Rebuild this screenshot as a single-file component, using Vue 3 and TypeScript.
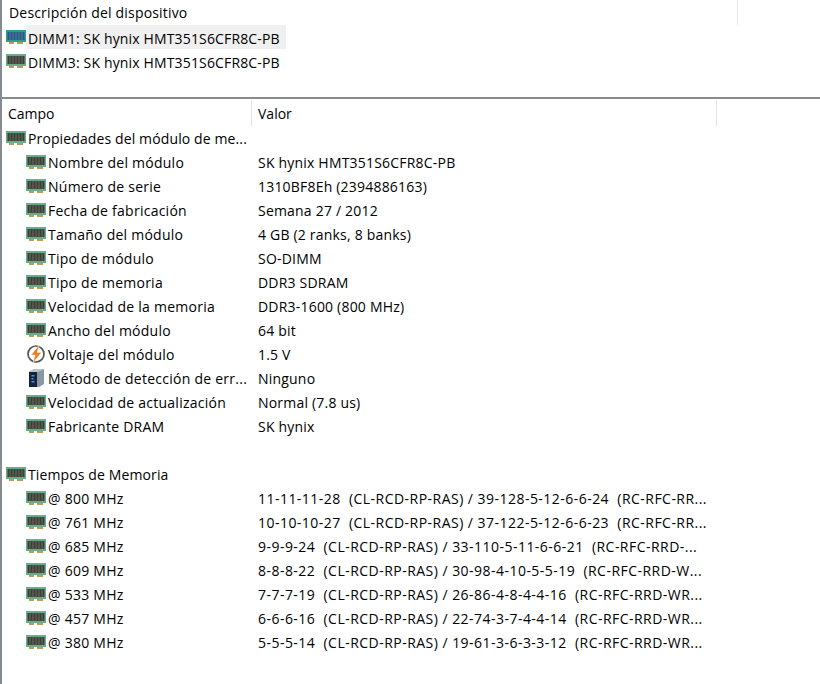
<script setup lang="ts">
type Row = {
  field: string;
  value?: string;
  icon?: 'ram' | 'volt' | 'ecc';
  level: 0 | 1;
  timing?: boolean;
};

const devices = [
  { id: 'dimm1', label: 'DIMM1: SK hynix HMT351S6CFR8C-PB', selected: true },
  { id: 'dimm3', label: 'DIMM3: SK hynix HMT351S6CFR8C-PB', selected: false },
];

const rows: Row[] = [
  { field: 'Propiedades del módulo de me...', level: 0, icon: 'ram' },
  { field: 'Nombre del módulo', value: 'SK hynix HMT351S6CFR8C-PB', level: 1, icon: 'ram' },
  { field: 'Número de serie', value: '1310BF8Eh (2394886163)', level: 1, icon: 'ram' },
  { field: 'Fecha de fabricación', value: 'Semana 27 / 2012', level: 1, icon: 'ram' },
  { field: 'Tamaño del módulo', value: '4 GB (2 ranks, 8 banks)', level: 1, icon: 'ram' },
  { field: 'Tipo de módulo', value: 'SO-DIMM', level: 1, icon: 'ram' },
  { field: 'Tipo de memoria', value: 'DDR3 SDRAM', level: 1, icon: 'ram' },
  { field: 'Velocidad de la memoria', value: 'DDR3-1600 (800 MHz)', level: 1, icon: 'ram' },
  { field: 'Ancho del módulo', value: '64 bit', level: 1, icon: 'ram' },
  { field: 'Voltaje del módulo', value: '1.5 V', level: 1, icon: 'volt' },
  { field: 'Método de detección de err...', value: 'Ninguno', level: 1, icon: 'ecc' },
  { field: 'Velocidad de actualización', value: 'Normal (7.8 us)', level: 1, icon: 'ram' },
  { field: 'Fabricante DRAM', value: 'SK hynix', level: 1, icon: 'ram' },
  { field: '', level: 0 },
  { field: 'Tiempos de Memoria', level: 0, icon: 'ram' },
  { field: '@ 800 MHz', value: '11-11-11-28  (CL-RCD-RP-RAS) / 39-128-5-12-6-6-24  (RC-RFC-RR...', level: 1, icon: 'ram', timing: true },
  { field: '@ 761 MHz', value: '10-10-10-27  (CL-RCD-RP-RAS) / 37-122-5-12-6-6-23  (RC-RFC-RR...', level: 1, icon: 'ram', timing: true },
  { field: '@ 685 MHz', value: '9-9-9-24  (CL-RCD-RP-RAS) / 33-110-5-11-6-6-21  (RC-RFC-RRD-...', level: 1, icon: 'ram', timing: true },
  { field: '@ 609 MHz', value: '8-8-8-22  (CL-RCD-RP-RAS) / 30-98-4-10-5-5-19  (RC-RFC-RRD-W...', level: 1, icon: 'ram', timing: true },
  { field: '@ 533 MHz', value: '7-7-7-19  (CL-RCD-RP-RAS) / 26-86-4-8-4-4-16  (RC-RFC-RRD-WR...', level: 1, icon: 'ram', timing: true },
  { field: '@ 457 MHz', value: '6-6-6-16  (CL-RCD-RP-RAS) / 22-74-3-7-4-4-14  (RC-RFC-RRD-WR...', level: 1, icon: 'ram', timing: true },
  { field: '@ 380 MHz', value: '5-5-5-14  (CL-RCD-RP-RAS) / 19-61-3-6-3-3-12  (RC-RFC-RRD-WR...', level: 1, icon: 'ram', timing: true },
];

const pins = [3.5, 6.5, 9.5, 12.5, 15.5];
</script>

<template>
  <div class="panel">
    <section class="devices">
      <div class="devices__head">
        <span class="devices__title">Descripción del dispositivo</span>
        <span class="devices__rule" />
      </div>
      <div v-for="device in devices" :key="device.id" class="device">
        <svg class="ram" viewBox="0 0 20 15" aria-hidden="true">
          <rect x="0" y="0" width="20" height="12" :fill="device.selected ? '#2f9c96' : '#66ad8d'" />
          <rect x="3" y="12" width="5" height="2" fill="#c9965a" />
          <rect x="11" y="12" width="6" height="2" fill="#c9965a" />
          <rect x="1.5" y="2" width="17" height="8" :fill="device.selected ? '#28597f' : '#3f3e38'" />
          <rect v-for="p in pins" :key="p" :x="p" y="2" width="1" height="8" :fill="device.selected ? '#4f849e' : '#6a6a62'" />
        </svg>
        <span class="device__label" :class="{ 'device__label--selected': device.selected }">{{ device.label }}</span>
      </div>
    </section>

    <section class="details">
      <div class="details__head">
        <span class="details__col details__col--field">Campo</span>
        <span class="details__col details__col--value">Valor</span>
      </div>
      <div v-for="(row, i) in rows" :key="i" class="row" :class="{ 'row--child': row.level === 1 }">
        <span class="row__field">
          <svg v-if="row.icon === 'ram'" class="ram" viewBox="0 0 20 15" aria-hidden="true">
            <rect x="0" y="0" width="20" height="12" fill="#66ad8d" />
            <rect x="3" y="12" width="5" height="2" fill="#c9965a" />
            <rect x="11" y="12" width="6" height="2" fill="#c9965a" />
            <rect x="1.5" y="2" width="17" height="8" fill="#3f3e38" />
            <rect v-for="p in pins" :key="p" :x="p" y="2" width="1" height="8" fill="#6a6a62" />
          </svg>
          <svg v-else-if="row.icon === 'volt'" class="glyph" viewBox="0 0 20 20" aria-hidden="true">
            <circle cx="10" cy="10" r="8" fill="#fff" stroke="#555555" stroke-width="1.7" />
            <path d="M13.5 0.5 5 11h4.2L6.5 19.5 15.5 8.5h-4.3z" fill="#ee7d1e" stroke="#fff" stroke-width="0.5" />
          </svg>
          <svg v-else-if="row.icon === 'ecc'" class="glyph" viewBox="0 0 20 20" aria-hidden="true">
            <path d="M3 4 8 1h10v15l-5 3H3z" fill="#8b96a3" />
            <path d="M3 4h8v15H3z" fill="#17233a" />
            <path d="M3 4 8 1h10l-6 3z" fill="#bcc3ca" />
            <rect x="5.5" y="7" width="3" height="1.5" fill="#3a9bdc" />
            <rect x="5.5" y="10" width="2" height="1.5" fill="#3a9bdc" />
            <rect x="5.5" y="13" width="3" height="1.5" fill="#3a9bdc" />
          </svg>
          <span class="row__label">{{ row.field }}</span>
        </span>
        <span class="row__value" :class="{ 'row__value--timing': row.timing }">{{ row.value }}</span>
      </div>
    </section>
  </div>
</template>

<style scoped>
.panel {
  width: 820px;
  height: 684px;
  box-sizing: border-box;
  border-left: 2px solid #868a91;
  background: #ffffff;
  color: #000000;
  font-family: "Open Sans", "Noto Sans", sans-serif;
  font-size: 14px;
  overflow: hidden;
}

.devices {
  height: 99px;
  box-sizing: border-box;
  border-bottom: 2px solid #868a91;
}

.devices__head {
  display: flex;
  height: 25px;
  align-items: center;
}

.devices__title {
  width: 735px;
  padding-left: 7px;
  box-sizing: border-box;
  letter-spacing: 0.18px;
}

.devices__rule,
.details__col--field,
.details__col--value {
  border-right: 1px solid #e4e4e4;
}

.devices__rule {
  height: 25px;
}

.device {
  display: flex;
  align-items: center;
  height: 24px;
  padding-left: 4px;
}

.device__label {
  display: flex;
  align-items: center;
  height: 24px;
  width: 260px;
  padding: 2px 0 0 2px;
  box-sizing: border-box;
  letter-spacing: 0.15px;
}

.device__label--selected {
  background: #f0f0f0;
}

.ram {
  width: 20px;
  height: 15px;
  flex: 0 0 auto;
}

.glyph {
  width: 20px;
  height: 20px;
  flex: 0 0 auto;
}

.details {
  padding-top: 1px;
}

.details__head {
  display: flex;
  height: 26px;
  align-items: center;
}

.details__col {
  height: 26px;
  line-height: 28px;
  box-sizing: border-box;
  padding-left: 6px;
}

.details__col--field {
  width: 250px;
}

.details__col--value {
  width: 465px;
}

.row {
  display: flex;
  align-items: center;
  height: 24px;
  white-space: pre;
}

.row__field {
  display: flex;
  align-items: center;
  width: 250px;
  box-sizing: border-box;
  padding-left: 4px;
}

.row--child .row__field {
  padding-left: 24px;
}

.row__label {
  padding: 1px 0 0 2px;
  letter-spacing: 0.12px;
}

.row--child .row__label {
  letter-spacing: 0.25px;
}

.row__value {
  padding: 1px 0 0 6px;
  letter-spacing: 0.2px;
}

.row__value--timing {
  letter-spacing: 0.47px;
}
</style>

<style>
body {
  margin: 0;
  background: #ffffff;
}
</style>
